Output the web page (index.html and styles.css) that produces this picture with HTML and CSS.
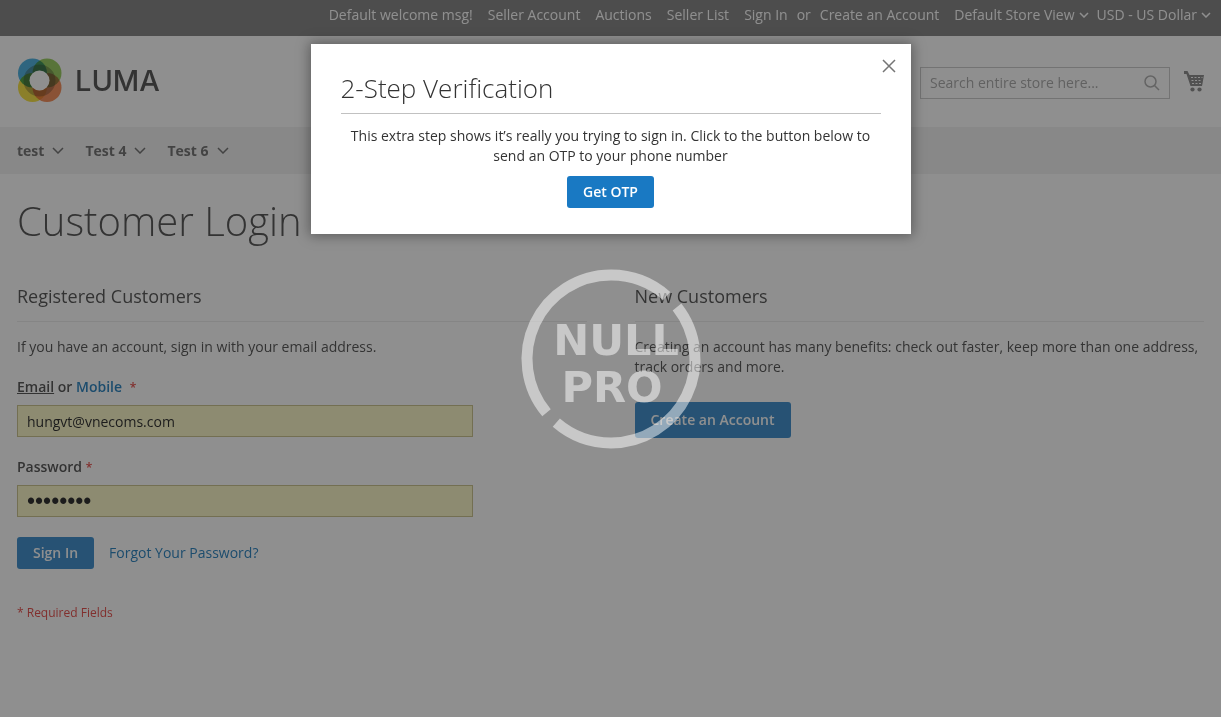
FILE: index.html
```html
<!DOCTYPE html>
<html lang="en">
<head>
    <meta charset="utf-8">
    <title>Customer Login</title>
    <link rel="stylesheet" href="styles.css">
</head>
<body>
    <header class="page-header">
        <div class="panel">
            <ul class="header-links">
                <li class="welcome">Default welcome msg!</li>
                <li><a href="#">Seller Account</a></li>
                <li><a href="#">Auctions</a></li>
                <li><a href="#">Seller List</a></li>
                <li class="authorization"><a href="#">Sign In</a><span>or</span><a href="#">Create an Account</a></li>
            </ul>
            <div class="switchers">
                <button type="button" class="switcher">Default Store View
                    <svg width="10" height="6" viewBox="0 0 10 6"><path d="M1 1l4 4 4-4"/></svg>
                </button>
                <button type="button" class="switcher">USD - US Dollar
                    <svg width="10" height="6" viewBox="0 0 10 6"><path d="M1 1l4 4 4-4"/></svg>
                </button>
            </div>
        </div>
        <div class="header-content">
            <a class="logo" href="#">
                <svg width="46" height="46" viewBox="0 0 46 46">
                    <g class="logo-rings">
                        <circle cx="15.500" cy="15" r="14.500" fill="#2ba3dc"/>
                        <circle cx="30" cy="15" r="14.500" fill="#86c440"/>
                        <circle cx="15.500" cy="29.500" r="14.500" fill="#f5dc1e"/>
                        <circle cx="30" cy="29.500" r="14.500" fill="#f4783a"/>
                        <circle cx="22.500" cy="22.500" r="13" fill="none" stroke="#b5b0a0" stroke-width="6"/>
                    </g>
                    <circle cx="22.500" cy="22.500" r="10" fill="#fff"/>
                </svg>
                <span>LUMA</span>
            </a>
            <form class="search" onsubmit="return false;">
                <input type="text" aria-label="Search" placeholder="Search entire store here...">
                <button type="submit" aria-label="Search">
                    <svg width="16" height="16" viewBox="0 0 16 16"><circle cx="6.500" cy="6.500" r="5.500"/><path d="M10.500 10.500L15 15"/></svg>
                </button>
            </form>
            <a class="cart" href="#" aria-label="My Cart">
                <svg width="20" height="21" viewBox="0 0 20 21">
                    <path d="M0 0h3.500l2 4H20l-1.500 8.500L18 15H6.500L5.500 12 2.500 3H0z"/>
                    <circle cx="8.500" cy="18.500" r="2.100"/>
                    <circle cx="15.500" cy="18.500" r="2.100"/>
                    <path class="cart-grid" d="M7 6.500h11.500M7.500 9.500h10.500M8 12.500h9.500" stroke-dasharray="2 1.500"/>
                </svg>
            </a>
        </div>
        <nav class="navigation">
            <a href="#">test <svg width="12" height="7" viewBox="0 0 12 7"><path d="M1 1l5 5 5-5"/></svg></a>
            <a href="#">Test 4 <svg width="12" height="7" viewBox="0 0 12 7"><path d="M1 1l5 5 5-5"/></svg></a>
            <a href="#">Test 6 <svg width="12" height="7" viewBox="0 0 12 7"><path d="M1 1l5 5 5-5"/></svg></a>
        </nav>
    </header>

    <main class="page-main">
        <h1>Customer Login</h1>
        <div class="login-container">
            <section class="block block-login">
                <h2>Registered Customers</h2>
                <p>If you have an account, sign in with your email address.</p>
                <form onsubmit="return false;">
                    <div class="field">
                        <label for="email"><u>Email</u> or <a href="#">Mobile</a> <span class="required wide">*</span></label>
                        <input type="text" id="email" value="hungvt@vnecoms.com">
                    </div>
                    <div class="field">
                        <label for="pass">Password <span class="required">*</span></label>
                        <input type="password" id="pass" value="password">
                    </div>
                    <div class="actions">
                        <button type="submit" class="button">Sign In</button>
                        <a href="#">Forgot Your Password?</a>
                    </div>
                    <p class="note">* Required Fields</p>
                </form>
            </section>
            <section class="block">
                <h2>New Customers</h2>
                <p>Creating an account has many benefits: check out faster, keep more than one address, track orders and more.</p>
                <a href="#" class="button create">Create an Account</a>
            </section>
        </div>
    </main>

    <!-- OTP popup -->
    <div class="modal">
        <div class="modal-content" role="dialog" aria-labelledby="otp-title">
            <button type="button" class="close" aria-label="Close">
                <svg width="14" height="14" viewBox="0 0 14 14"><path d="M1 1l12 12M13 1L1 13"/></svg>
            </button>
            <h2 id="otp-title">2-Step Verification</h2>
            <p>This extra step shows it’s really you trying to sign in. Click to the button below to send an OTP to your phone number</p>
            <button type="button" class="button">Get OTP</button>
        </div>
    </div>

    <!-- Watermark -->
    <div class="watermark">
        <svg width="180" height="180" viewBox="-90 -90 180 180">
            <path d="M-64.500 53.800A84 84 0 0 1 0 -84A84 84 0 0 1 55.600 -63"/>
            <path d="M66 -52A84 84 0 0 1 0 84A84 84 0 0 1 -54.700 63.700"/>
            <text x="5" y="-4">NULL</text>
            <text x="1" y="43">PRO</text>
        </svg>
    </div>
</body>
</html>
```

FILE: styles.css
```css
* {
    box-sizing: border-box;
}

body {
    margin: 0;
    font-family: "Open Sans", "Noto Sans", sans-serif;
    font-size: 14px;
    line-height: 20px;
    color: #333;
    background: #fff;
}

a {
    color: #006bb4;
    text-decoration: none;
}

button,
input {
    font-family: inherit;
    font-size: 14px;
}

svg {
    fill: none;
    stroke: currentColor;
    stroke-width: 1.5;
}

/* Header */
.panel {
    display: flex;
    justify-content: flex-end;
    gap: 15px;
    height: 36px;
    padding: 5px 10px 0 0;
    background: #6e6e6e;
    color: #fff;
}

.header-links {
    display: flex;
    gap: 15px;
    margin: 0;
    padding: 0;
    list-style: none;
}

.panel a {
    color: #fff;
}

.authorization {
    display: flex;
    gap: 9px;
}

.switchers {
    display: flex;
    align-items: flex-start;
    gap: 8px;
}

.switcher {
    display: flex;
    align-items: center;
    gap: 4px;
    padding: 0;
    border: none;
    background: none;
    color: #fff;
    line-height: 20px;
}

.header-content {
    display: flex;
    align-items: center;
    height: 91px;
    padding: 0 17px;
}

.logo {
    display: flex;
    align-items: center;
    gap: 12px;
    margin: 0 auto 2px 0;
    color: #333;
    font-family: Inter, sans-serif;
    font-size: 29px;
    font-weight: 500;
}

.logo svg {
    stroke: none;
}

.logo-rings circle {
    mix-blend-mode: multiply;
}

.search {
    display: flex;
    align-items: center;
    width: 250px;
    height: 32px;
    margin-top: 2px;
    padding: 0 9px;
    border: 1px solid #c2c2c2;
}

.search input {
    flex: 1;
    min-width: 0;
    padding: 0;
    border: none;
    outline: none;
    background: none;
}

.search input::placeholder {
    color: #999;
}

.search button {
    display: flex;
    padding: 0;
    border: none;
    background: none;
    color: #a0a0a0;
}

.cart {
    display: flex;
    margin-left: 14px;
    color: #757575;
}

.cart svg {
    fill: currentColor;
    stroke: none;
}

.cart .cart-grid {
    stroke: #fff;
    stroke-width: 1;
}

.navigation {
    display: flex;
    gap: 21px;
    height: 47px;
    padding: 0 17px;
    background: #f0f0f0;
}

.navigation a {
    display: flex;
    align-items: center;
    gap: 8px;
    color: #575757;
    font-weight: 700;
}

/* Login page */
.page-main {
    padding: 20px 17px;
}

h1 {
    margin: 0 0 36px;
    font-size: 40px;
    font-weight: 300;
    line-height: 54px;
}

.login-container {
    display: grid;
    grid-template-columns: 1fr 1fr;
    column-gap: 48px;
}

.block h2 {
    margin: 0 0 15px;
    padding-bottom: 13px;
    border-bottom: 1px solid #e8e8e8;
    font-size: 18px;
    font-weight: 400;
    line-height: 24px;
}

.block p {
    margin: 0 0 20px;
}

.field {
    width: 80%;
    margin-bottom: 20px;
}

.field label {
    display: block;
    height: 20px;
    margin-bottom: 8px;
    font-weight: 600;
}

.field input {
    display: block;
    width: 100%;
    height: 32px;
    padding: 0 9px;
    border: 1px solid #c2b878;
    background: #faf6bd;
    color: #000;
}

.field input[type="password"] {
    font-family: "Liberation Sans", sans-serif;
    font-size: 23px;
}

.required {
    color: #e02b27;
    font-size: 12px;
}

.wide {
    margin-left: 4px;
}

.button {
    padding: 6px 16px;
    border: none;
    border-radius: 3px;
    background: #1979c3;
    color: #fff;
    font-weight: 600;
    line-height: 20px;
    cursor: pointer;
}

.create {
    display: inline-block;
    margin-top: 5px;
    padding: 8px 16px;
}

.actions {
    display: flex;
    align-items: center;
    gap: 15px;
    margin-bottom: 34px;
}

.block .note {
    color: #e02b27;
    font-size: 12px;
}

/* Popup */
.modal {
    position: fixed;
    inset: 0;
    padding-top: 44px;
    background: rgba(51, 51, 51, 0.55);
}

.modal-content {
    position: relative;
    width: 90%;
    max-width: 600px;
    margin: 0 auto;
    padding: 26px 30px;
    background: #fff;
    box-shadow: 0 0 12px 2px rgba(0, 0, 0, 0.35);
    text-align: center;
}

.modal-content h2 {
    margin: 0 0 12px;
    padding-bottom: 7px;
    border-bottom: 1px solid #c1c1c1;
    font-size: 26px;
    font-weight: 300;
    line-height: 36px;
    text-align: left;
}

.modal-content p {
    margin: 0 0 10px;
}

.close {
    position: absolute;
    top: 15px;
    right: 15px;
    display: flex;
    padding: 0;
    border: none;
    background: none;
    color: #757575;
    cursor: pointer;
}

/* Watermark */
.watermark {
    position: fixed;
    inset: 0;
    display: flex;
    align-items: center;
    justify-content: center;
    opacity: 0.5;
    pointer-events: none;
}

.watermark svg {
    overflow: visible;
}

.watermark path {
    stroke: #fff;
    stroke-width: 11;
}

.watermark text {
    fill: #fff;
    stroke: none;
    font-family: "DejaVu Sans", sans-serif;
    font-size: 43px;
    font-weight: 700;
    text-anchor: middle;
}
```
